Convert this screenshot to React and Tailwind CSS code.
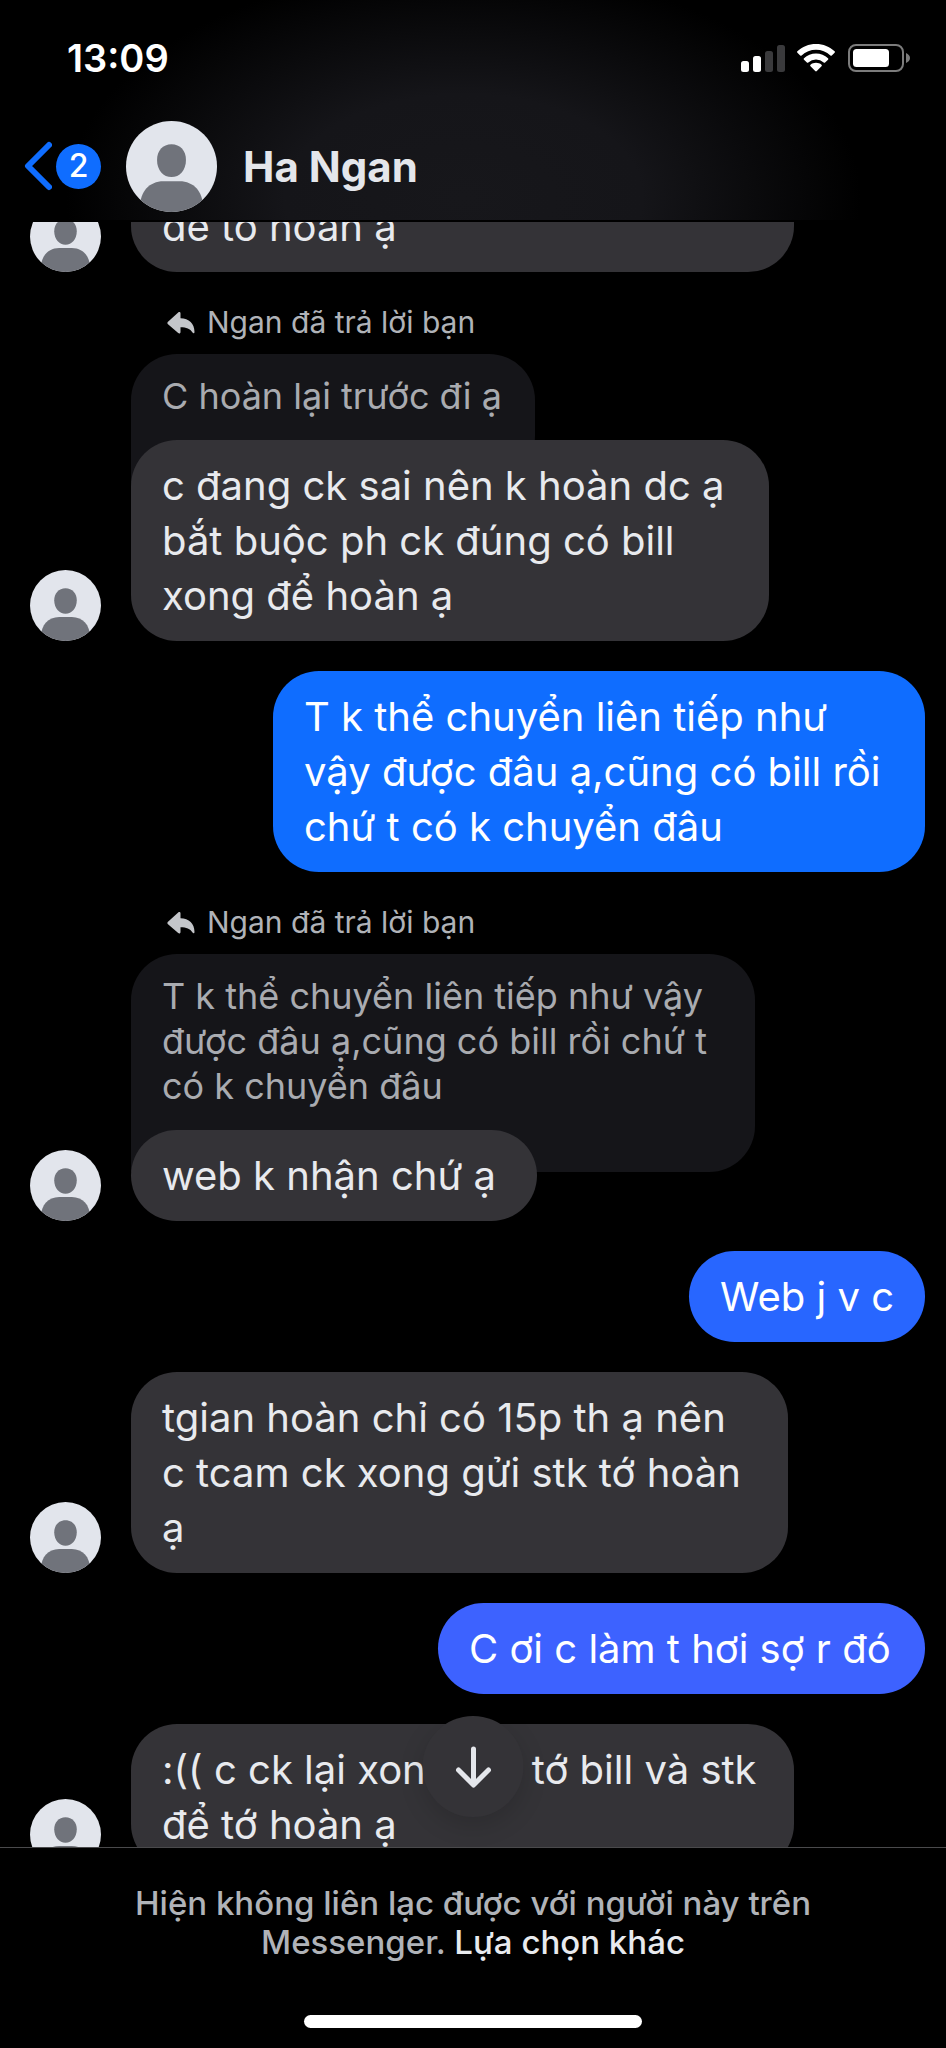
import { useId } from "react";
import clsx from "clsx";

const REPLY_LABEL = "Ngan đã trả lời bạn";

const messages = [
  { id: 1, from: "ngan", text: "để tớ hoàn ạ", size: "w-[663px] rounded-t-none pt-0 -mt-1.5" },
  {
    id: 2,
    from: "ngan",
    quote: { text: "C hoàn lại trước đi ạ", size: "w-[404px]" },
    text: "c đang ck sai nên k hoàn dc ạ\nbắt buộc ph ck đúng có bill\nxong để hoàn ạ",
    size: "w-[638px]",
  },
  {
    id: 3,
    from: "me",
    text: "T k thể chuyển liên tiếp như\nvậy được đâu ạ,cũng có bill rồi\nchứ t có k chuyển đâu",
    size: "w-[652px] bg-[#0f6dff]",
  },
  {
    id: 4,
    from: "ngan",
    quote: {
      text: "T k thể chuyển liên tiếp như vậy\nđược đâu ạ,cũng có bill rồi chứ t\ncó k chuyển đâu",
      size: "w-[624px]",
    },
    text: "web k nhận chứ ạ",
    size: "w-[406px]",
  },
  { id: 5, from: "me", text: "Web j v c", size: "bg-[#2866ff]" },
  {
    id: 6,
    from: "ngan",
    text: "tgian hoàn chỉ có 15p th ạ nên\nc tcam ck xong gửi stk tớ hoàn\nạ",
    size: "w-[657px]",
  },
  { id: 7, from: "me", text: "C ơi c làm t hơi sợ r đó", size: "w-[487px] bg-[#3d62ff]" },
  {
    id: 8,
    from: "ngan",
    text: ":(( c ck lại xong gửi tớ bill và stk\nđể tớ hoàn ạ",
    size: "w-[663px]",
  },
];

function Avatar({ className }) {
  const clip = useId();
  return (
    <svg viewBox="0 0 90 90" className={clsx("shrink-0", className)} aria-hidden="true">
      <clipPath id={clip}>
        <circle cx="45" cy="45" r="45" />
      </clipPath>
      <g clipPath={`url(#${clip})`}>
        <rect width="90" height="90" fill="#e2e5ec" />
        <path
          d="M45 23c8.600 0 14.300 6.300 14.300 15.500C59.300 48.500 53 55.500 45 55.500S30.700 48.500 30.700 38.500C30.700 29.300 36.400 23 45 23Z"
          fill="#70737b"
        />
        <path d="M14 90V84C14 70 23 59.500 37 59.500H53C67 59.500 76 70 76 84V90Z" fill="#70737b" />
      </g>
    </svg>
  );
}

function StatusIcons() {
  return (
    <div className="flex items-center gap-3">
      <svg width="44" height="28" viewBox="0 0 44 28" aria-hidden="true">
        <rect x="0" y="17" width="8" height="11" rx="2.500" fill="#fff" />
        <rect x="12" y="12" width="8" height="16" rx="2.500" fill="#fff" />
        <rect x="24" y="7" width="8" height="21" rx="2.500" fill="#3a3a3c" />
        <rect x="36" y="1" width="8" height="27" rx="2.500" fill="#3a3a3c" />
      </svg>
      <svg width="38" height="28" viewBox="0 0 38 28" fill="#fff" aria-hidden="true">
        <path d="M19 0C26.200 0 32.800 2.700 37.600 7.300a1 1 0 0 1 0 1.400L34.800 11.400a1 1 0 0 1-1.400 0A21 21 0 0 0 4.600 11.400a1 1 0 0 1-1.400 0L.4 8.700a1 1 0 0 1 0-1.400C5.200 2.700 11.800 0 19 0Z" />
        <path d="M19 9.500c4.600 0 8.800 1.700 12 4.700a1 1 0 0 1 0 1.500l-2.900 2.800a1 1 0 0 1-1.400 0 11.300 11.300 0 0 0-15.400 0 1 1 0 0 1-1.400 0L7 15.700a1 1 0 0 1 0-1.500c3.200-3 7.400-4.700 12-4.700Z" />
        <path d="M19 18.800c2.100 0 4 .7 5.500 1.900a1 1 0 0 1 0 1.500l-4.700 4.800a1.100 1.100 0 0 1-1.600 0l-4.700-4.800a1 1 0 0 1 0-1.500c1.500-1.200 3.400-1.900 5.500-1.900Z" />
      </svg>
      <svg width="63" height="28" viewBox="0 0 63 28" aria-hidden="true">
        <rect x="2" y="1" width="54" height="26" rx="7" fill="none" stroke="#7c7c7c" strokeWidth="2" />
        <rect x="6" y="5" width="36" height="18" rx="3.500" fill="#fff" />
        <path d="M59 9c2.500 1 4 3 4 5s-1.500 4-4 5Z" fill="#7c7c7c" />
      </svg>
    </div>
  );
}

function Bubble({ children, className }) {
  return (
    <p
      className={clsx(
        "relative max-w-full rounded-[46px] px-[31px] py-[18px] text-[40px] leading-[55px] whitespace-pre-line",
        className
      )}
    >
      {children}
    </p>
  );
}

function Quote({ quote }) {
  return (
    <>
      <div className="flex h-[52px] items-start gap-3 pl-9 text-[30px] leading-[40px] text-[#b0b3b8]">
        <svg width="28" height="22" viewBox="0 0 28 22" className="mt-2.5 fill-[#c4c6ca]" aria-hidden="true">
          <path d="M13.500 1.500v4.800C22 6.500 27.500 11.500 27.500 20c0 1.500-1.200 1.800-2 .6-2.400-3.800-6-5.300-12-5.300V20c0 1.500-1.300 1.900-2.300 1L1 12.200c-.8-.7-.8-1.700 0-2.400L11.200.6c1-.9 2.300-.5 2.300.9Z" />
        </svg>
        {REPLY_LABEL}
      </div>
      <p
        className={clsx(
          "-mb-[42px] max-w-full rounded-t-[46px] rounded-br-[46px] bg-[#151519] px-[31px] pt-5 pb-[63px] text-[36px] leading-[45px] whitespace-pre-line text-[#a9abb0]",
          quote.size
        )}
      >
        {quote.text}
      </p>
    </>
  );
}

function Message({ message }) {
  if (message.from === "me") {
    return (
      <li className="flex justify-end">
        <Bubble className={clsx("text-white", message.size)}>{message.text}</Bubble>
      </li>
    );
  }

  return (
    <li className="flex items-end gap-[30px]">
      <Avatar className="size-[71px]" />
      <div className="flex min-w-0 flex-col items-start">
        {message.quote ? <Quote quote={message.quote} /> : null}
        <Bubble className={clsx("bg-[#343337] text-[#e8eaee]", message.size)}>{message.text}</Bubble>
      </div>
    </li>
  );
}

export default function App() {
  return (
    <div className="flex h-screen flex-col overflow-hidden bg-black font-['Inter','Noto_Sans',sans-serif] text-white">
      <header className="z-10 shrink-0 bg-black bg-[radial-gradient(ellipse_42%_105%_at_49%_90%,#17171b_0%,#151519_45%,#000_100%)] pb-1">
        <div className="flex h-[116px] items-center justify-between pr-9 pl-[67px]">
          <time className="text-[38px] font-semibold">13:09</time>
          <StatusIcons />
        </div>
        <div className="flex h-[100px] items-center pl-6">
          <button type="button" aria-label="Quay lại" className="flex items-center gap-1">
            <svg width="28" height="50" viewBox="0 0 28 50" fill="none" aria-hidden="true">
              <path
                d="M25 4 4 25 25 46"
                stroke="#0f6dff"
                strokeWidth="6"
                strokeLinecap="round"
                strokeLinejoin="round"
              />
            </svg>
            <span className="flex size-[45px] items-center justify-center rounded-full bg-[#0f6dff] text-[32px] font-medium">
              2
            </span>
          </button>
          <Avatar className="ml-[25px] size-[91px]" />
          <h1 className="ml-[26px] text-[42px] font-bold text-[#e4e6eb]">Ha Ngan</h1>
        </div>
      </header>

      <main className="relative mt-0.5 min-h-0 flex-1">
        <div className="h-full overflow-hidden">
          <ul className="-mt-[21px] flex flex-col gap-[30px] pr-[21px] pl-[30px]">
            {messages.map((message) => (
              <Message key={message.id} message={message} />
            ))}
          </ul>
        </div>
        <button
          type="button"
          aria-label="Cuộn xuống tin nhắn mới nhất"
          className="absolute bottom-[30px] left-1/2 flex size-[101px] -translate-x-1/2 items-center justify-center rounded-full bg-[#343337] shadow-[0_8px_24px_rgba(0,0,0,0.15)]"
        >
          <svg width="36" height="42" viewBox="0 0 36 42" fill="none" aria-hidden="true">
            <path
              d="M18 3V38M3 24 18 39 33 24"
              stroke="#e4e6eb"
              strokeWidth="5"
              strokeLinecap="round"
              strokeLinejoin="round"
            />
          </svg>
        </button>
      </main>

      <footer className="flex shrink-0 flex-col items-center border-t border-[#4a4a4c] pt-9 pb-5 text-center">
        <p className="max-w-[720px] text-[33px] leading-[39px] font-medium text-[#b0b3b8]">
          Hiện không liên lạc được với người này trên Messenger.{" "}
          <a href="#options" className="text-[#e8eaee]">
            Lựa chọn khác
          </a>
        </p>
        <div className="mt-[53px] h-[13px] w-[338px] rounded-full bg-white" />
      </footer>
    </div>
  );
}
